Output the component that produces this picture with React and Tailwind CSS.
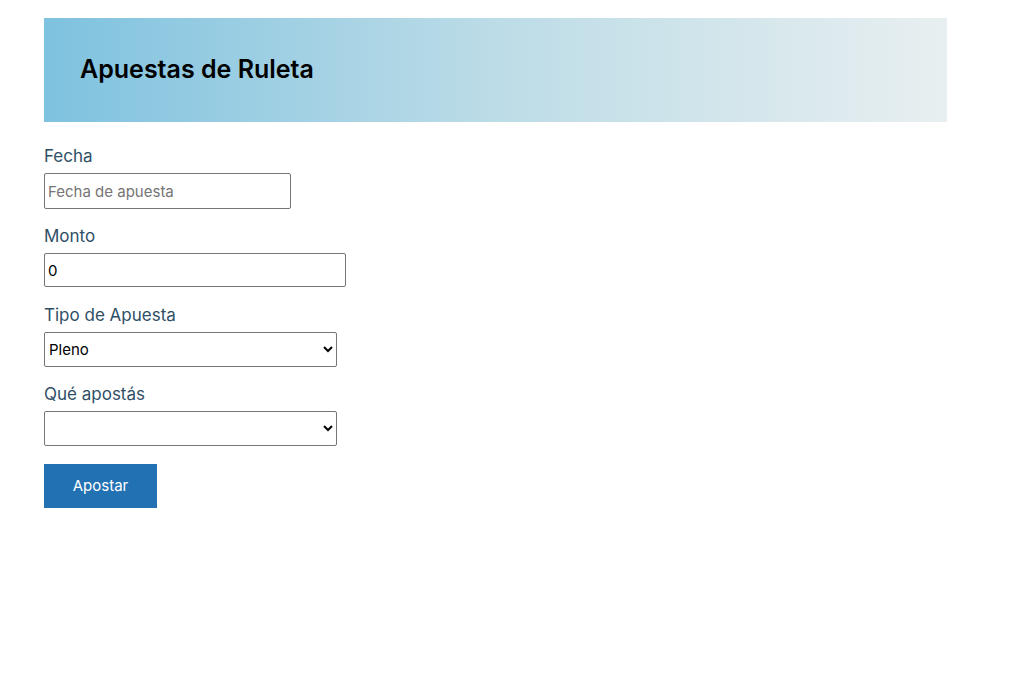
export default function App() {
  return (
    <div className="min-h-screen bg-white font-['Inter','Noto_Sans',sans-serif]">
      <div className="ml-[44px] w-[903px] pt-[18px]">
        {/* Header */}
        <header className="h-[104px] flex items-center px-9 bg-gradient-to-r from-[#7ec2df] via-[#bcdce7] to-[#e8eff0]">
          <h1 className="text-[25px] font-semibold text-black">Apuestas de Ruleta</h1>
        </header>

        {/* Form */}
        <form className="mt-[22px] flex flex-col">
          <Field label="Fecha">
            <input
              type="text"
              placeholder="Fecha de apuesta"
              className="w-[247px] h-[36px] px-[3px] border border-[#767676] rounded-[2px] text-[15px] text-black placeholder:text-[#757575]"
            />
          </Field>

          <Field label="Monto" last>
            <input
              type="text"
              defaultValue="0"
              className="w-[302px] h-[34px] px-[3px] border border-[#767676] rounded-[2px] text-[15px] text-black"
            />
          </Field>

          <Field label="Tipo de Apuesta">
            <select className="w-[293px] h-[35px] border border-[#767676] rounded-[2px] text-[15px] text-black bg-white">
              <option>Pleno</option>
            </select>
          </Field>

          <Field label="Qué apostás">
            <select className="w-[293px] h-[35px] border border-[#767676] rounded-[2px] text-[15px] text-black bg-white">
              <option></option>
            </select>
          </Field>

          <div className="mt-[3px]">
            <button
              type="button"
              className="w-[113px] h-[44px] bg-[#2271b3] text-white text-[15px]"
            >
              Apostar
            </button>
          </div>
        </form>
      </div>
    </div>
  );
}

function Field({ label, children, last }) {
  return (
    <div className={`flex flex-col ${last ? "mb-[16px]" : "mb-[15px]"}`}>
      <label className="text-[17px] leading-[24px] mb-[5px] text-[#2f4f66]">{label}</label>
      {children}
    </div>
  );
}
